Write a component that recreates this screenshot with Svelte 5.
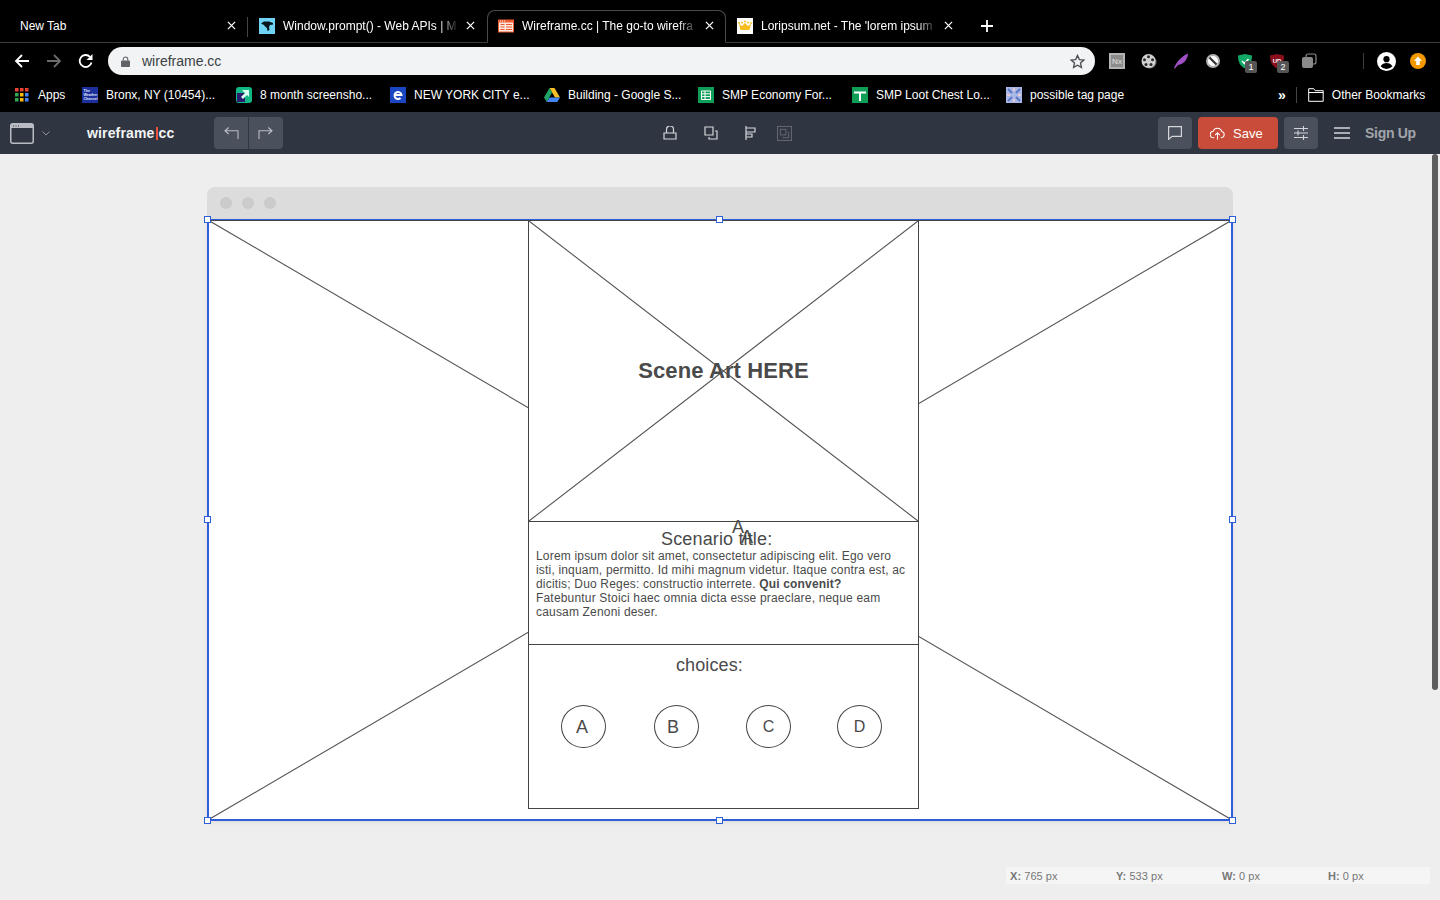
<script>
  const tabs = [
    { title: 'New Tab', icon: '' },
    { title: 'Window.prompt() - Web APIs | M', icon: 'mdn' },
    { title: 'Wireframe.cc | The go-to wirefra', icon: 'wf', active: true },
    { title: "Loripsum.net - The 'lorem ipsum", icon: 'crown' }
  ];
  const bookmarks = [
    { label: 'Bronx, NY (10454)...', icon: 'weather' },
    { label: '8 month screensho...', icon: 'shot' },
    { label: 'NEW YORK CITY e...', icon: 'ie' },
    { label: 'Building - Google S...', icon: 'drive' },
    { label: 'SMP Economy For...', icon: 'sheet' },
    { label: 'SMP Loot Chest Lo...', icon: 'cross' },
    { label: 'possible tag page', icon: 'tag' }
  ];
  const handles = ['tl', 'tc', 'tr', 'ml', 'mr', 'bl', 'bc', 'br'];
  const choices = [
    { key: 'A', cls: 'a' },
    { key: 'B', cls: 'b' },
    { key: 'C', cls: 'c' },
    { key: 'D', cls: 'd' }
  ];
  const stats = [
    { k: 'X:', v: '765 px' },
    { k: 'Y:', v: '533 px' },
    { k: 'W:', v: '0 px' },
    { k: 'H:', v: '0 px' }
  ];
</script>

{#snippet favicon(name)}
  <svg class="fav" viewBox="0 0 16 16">
    {#if name === 'mdn'}
      <rect width="16" height="16" fill="#6fd3f5" />
      <path d="M2 5.500L5 3.500h5l4 1.500v1.500l-3 .5-1 2 .5 3-2 1-.5-3-2-1.500-1-1.500z" fill="#06141c" />
    {:else if name === 'wf'}
      <rect width="16" height="13" y="1.500" fill="#f05a32" />
      <rect x="1" y="4.500" width="14" height="9" fill="#fde6dc" />
      <path d="M2.500 6.500h4M8 6.500h6M2.500 9h4M8 9h6M2.500 11.500h4M8 11.500h6" stroke="#f05a32" stroke-width="1" />
      <path d="M2 3h1M4 3h1M6 3h1" stroke="#fff" />
    {:else if name === 'crown'}
      <rect width="16" height="16" fill="#fff" />
      <path d="M2 6l3 2 3-3 3 3 3-2-1.500 6h-9z" fill="#f7bd1e" />
      <circle cx="2" cy="5" r="1" fill="#f7bd1e" /><circle cx="5" cy="4.500" r="1" fill="#f7bd1e" /><circle cx="8" cy="3.500" r="1" fill="#f7bd1e" /><circle cx="11" cy="4.500" r="1" fill="#f7bd1e" /><circle cx="14" cy="5" r="1" fill="#f7bd1e" />
    {:else if name === 'weather'}
      <rect width="16" height="16" fill="#1d2f9c" />
      <text x="1.500" y="5" font-size="3.600" font-weight="700" fill="#dfe4fa" font-family="Liberation Sans">The</text>
      <text x="1.500" y="9" font-size="3.600" font-weight="700" fill="#dfe4fa" font-family="Liberation Sans">Weather</text>
      <text x="1.500" y="13" font-size="3.600" font-weight="700" fill="#dfe4fa" font-family="Liberation Sans">Channel</text>
    {:else if name === 'shot'}
      <rect width="16" height="16" rx="3" fill="#12b886" />
      <rect x="1" y="6" width="8" height="9" fill="#2b1d6b" />
      <path d="M6 3h7v7l-2-2-4 4-2-2 4-4z" fill="#d8fff0" />
    {:else if name === 'ie'}
      <rect width="16" height="16" fill="#1b46c2" />
      <path d="M4.500 8h7a3.500 3.500 0 1 0-1 3" fill="none" stroke="#fff" stroke-width="2" />
    {:else if name === 'drive'}
      <path d="M5.500 1h5l5.500 9.500h-5z" fill="#f6bf26" />
      <path d="M5.500 1L0 10.500 2.700 15l5.300-9.500z" fill="#1fa463" />
      <path d="M2.700 15h10.600L16 10.500H5.400z" fill="#4385f5" />
    {:else if name === 'sheet'}
      <rect width="16" height="16" fill="#0f9d58" />
      <path d="M3.500 4h9v8.500h-9zM3.500 6.800h9M3.500 9.600h9M7 4v8.500" fill="none" stroke="#fff" />
    {:else if name === 'cross'}
      <rect width="16" height="16" fill="#0f9d58" />
      <path d="M2 5.500h12M8 5.500V14" stroke="#fff" stroke-width="2" />
    {:else if name === 'tag'}
      <rect width="16" height="16" fill="#a9b8e6" />
      <path d="M2 2l4 4M14 2l-4 4M2 14l4-4M14 14l-4-4" stroke="#5e78c9" stroke-width="2" />
      <path d="M8 1v3M8 12v3M1 8h3M12 8h3" stroke="#e9c9d2" stroke-width="2" />
    {/if}
  </svg>
{/snippet}

<div class="browser">
  <div class="tabstrip">
    {#each tabs as tab}
      <div class="tab" class:active={tab.active} class:plain={!tab.icon}>
        {#if tab.icon}{@render favicon(tab.icon)}{/if}
        <span class="tab-title">{tab.title}</span>
        <svg class="tab-x" viewBox="0 0 10 10"><path d="M1 1l8 8M9 1l-8 8" stroke="#fff" stroke-width="1.400" /></svg>
      </div>
    {/each}
    <svg class="plus" viewBox="0 0 12 12"><path d="M6 0v12M0 6h12" stroke="#fff" stroke-width="1.800" /></svg>
  </div>

  <div class="toolbar">
    <svg class="nav" viewBox="0 0 16 16"><path d="M15 8H2M8 2L2 8l6 6" fill="none" stroke="#fff" stroke-width="1.800" /></svg>
    <svg class="nav dim" viewBox="0 0 16 16"><path d="M1 8h13M8 2l6 6-6 6" fill="none" stroke="#6b6b6b" stroke-width="1.800" /></svg>
    <svg class="nav" viewBox="0 0 16 16"><path d="M13.500 9.500A6 6 0 1 1 12 3.800" fill="none" stroke="#fff" stroke-width="1.800" /><path d="M14.500 1v6h-6z" fill="#fff" /></svg>
    <div class="omnibox">
      <svg class="lock" viewBox="0 0 10 12"><path d="M2.500 5V3.500a2.500 2.500 0 0 1 5 0V5" fill="none" stroke="#5f6368" stroke-width="1.200" /><rect y="5" width="10" height="7" rx="1" fill="#5f6368" /></svg>
      <span class="url">wireframe.cc</span>
      <svg class="star" viewBox="0 0 16 16"><path d="M8 1.500l2 4.400 4.800.5-3.600 3.200 1 4.700L8 11.900l-4.200 2.400 1-4.700L1.200 6.400 6 5.900z" fill="none" stroke="#4a4d52" stroke-width="1.400" /></svg>
    </div>
    <div class="exts">
      <svg class="ext" viewBox="0 0 16 16"><rect width="16" height="16" fill="#b4b4b4" /><rect x="2" y="2" width="12" height="12" fill="#8b8b8b" /><text x="8" y="11" font-size="8" fill="#e4e4e4" text-anchor="middle" font-family="Liberation Sans">Nx</text></svg>
      <svg class="ext" viewBox="0 0 16 16"><circle cx="9" cy="9" r="6.500" fill="#777" /><circle cx="7.500" cy="8" r="7" fill="#d0d0d0" /><circle cx="7.500" cy="3.800" r="1.500" fill="#2a2a2a" /><circle cx="3.500" cy="6.800" r="1.500" fill="#2a2a2a" /><circle cx="11.500" cy="6.800" r="1.500" fill="#2a2a2a" /><circle cx="5" cy="11.500" r="1.500" fill="#2a2a2a" /><circle cx="10" cy="11.500" r="1.500" fill="#2a2a2a" /></svg>
      <svg class="ext" viewBox="0 0 16 16"><path d="M1 15.500C3 9 9 3 15 .5c-.5 6-4 10.500-10 11.500l-3 3.500z" fill="#a04fc4" /></svg>
      <svg class="ext" viewBox="0 0 16 16"><circle cx="8" cy="8" r="6" fill="#fff" stroke="#b0b0b0" stroke-width="2" /><path d="M4.500 4.500l7 7" stroke="#333" stroke-width="2.200" /></svg>
      <div class="ext-wrap">
        <svg class="ext" viewBox="0 0 16 16"><path d="M1 2.500L8 1l7 1.500C15 9 13 13 8 15.500 3 13 1 9 1 2.500z" fill="#12a866" /><path d="M5 8l2.500 2.500L11.500 6" fill="none" stroke="#fff" stroke-width="1.600" /></svg>
        <span class="ext-badge">1</span>
      </div>
      <div class="ext-wrap">
        <svg class="ext" viewBox="0 0 16 16"><path d="M1 2.500L8 1l7 1.500C15 9 13 13 8 15.500 3 13 1 9 1 2.500z" fill="#8a0f1c" /><text x="8" y="10" font-size="6" font-weight="700" fill="#fff" text-anchor="middle" font-family="Liberation Sans">UD</text></svg>
        <span class="ext-badge">2</span>
      </div>
      <svg class="ext" viewBox="0 0 16 16"><rect x="5" y="1" width="10" height="10" rx="2" fill="none" stroke="#8a8a8a" stroke-width="1.200" /><rect x="1" y="4" width="11" height="11" rx="2" fill="#8a8a8a" /></svg>
    </div>
    <div class="tb-sep"></div>
    <svg class="profile" viewBox="0 0 20 20"><circle cx="10" cy="10" r="10" fill="#fff" /><circle cx="10" cy="7.500" r="3.300" fill="#000" /><path d="M3.800 15c1.500-2.600 3.700-3.400 6.200-3.400s4.700.8 6.200 3.400A8 8 0 0 1 3.800 15z" fill="#000" /></svg>
    <svg class="update" viewBox="0 0 16 16"><circle cx="8" cy="8" r="8" fill="#f29900" /><path d="M8 3.500l4 4.500H9.800v4H6.200V8H4z" fill="#fff" /></svg>
  </div>

  <div class="bookmarks">
    <div class="bm apps">
      <svg class="fav" viewBox="0 0 14 14">
        <path d="M0 0h3.500v3.500H0z" fill="#ea4335" /><path d="M5 0h3.500v3.500H5z" fill="#ea4335" /><path d="M10 0h3.500v3.500H10z" fill="#ea4335" />
        <path d="M0 5h3.500v3.500H0z" fill="#34a853" /><path d="M5 5h3.500v3.500H5z" fill="#fbbc05" /><path d="M10 5h3.500v3.500H10z" fill="#4285f4" />
        <path d="M0 10h3.500v3.500H0z" fill="#34a853" /><path d="M5 10h3.500v3.500H5z" fill="#fbbc05" /><path d="M10 10h3.500v3.500H10z" fill="#4285f4" />
      </svg>
      <span>Apps</span>
    </div>
    {#each bookmarks as b}
      <div class="bm">
        {@render favicon(b.icon)}
        <span>{b.label}</span>
      </div>
    {/each}
    <span class="more">»</span>
    <div class="bm-sep"></div>
    <div class="bm other">
      <svg class="fav" viewBox="0 0 16 14"><path d="M.7.700h5l1.500 2h8v10.600H.7zM.7 4.500h14.500" fill="none" stroke="#fff" stroke-width="1" /></svg>
      <span>Other Bookmarks</span>
    </div>
  </div>
</div>

<header class="appbar">
  <svg class="win-icon" viewBox="0 0 24 21">
    <rect x=".75" y=".75" width="22.500" height="19.500" rx="2" fill="none" stroke="#b9bcc2" stroke-width="1.500" />
    <path d="M1 1h22v4H1z" fill="#b9bcc2" />
    <path d="M3 3h1M5.500 3h1M8 3h1" stroke="#30363f" />
  </svg>
  <svg class="chev" viewBox="0 0 8 5"><path d="M.5.500L4 4 7.500.500" fill="none" stroke="#8d929b" /></svg>
  <div class="logo">wireframe<i></i>cc</div>
  <div class="history">
    <button class="hist-btn" aria-label="Undo"><svg viewBox="0 0 16 14"><path d="M15 13V4H1M5 0.500L1 4l4 3.500" fill="none" stroke="#b9bcc2" stroke-width="1.200" /></svg></button>
    <button class="hist-btn redo" aria-label="Redo"><svg viewBox="0 0 16 14"><path d="M1 13V4h14M11 .500L15 4l-4 3.500" fill="none" stroke="#b9bcc2" stroke-width="1.200" /></svg></button>
  </div>
  <div class="tools">
    <svg class="tool" viewBox="0 0 14 14"><path d="M1 7h12v6H1zM3.500 7V3.500a3.500 3.500 0 0 1 7 0V7" fill="none" stroke="#d4d6da" stroke-width="1.200" /></svg>
    <svg class="tool" viewBox="0 0 14 14"><path d="M1 1h8v8H1z" fill="none" stroke="#d4d6da" stroke-width="1.200" /><path d="M11 5h2v8H5v-2" fill="none" stroke="#d4d6da" stroke-width="1.200" /></svg>
    <svg class="tool" viewBox="0 0 14 14"><path d="M2 0v14M2 2h9v4H2M2 8h6v3H2" fill="none" stroke="#d4d6da" stroke-width="1.200" /></svg>
    <svg class="tool off" viewBox="0 0 16 16"><rect x=".5" y=".5" width="15" height="15" fill="none" stroke="#666a72" /><rect x="3.500" y="3.500" width="6" height="6" fill="none" stroke="#666a72" /><path d="M11.500 6.500h1v6h-6v-1" fill="none" stroke="#666a72" /></svg>
  </div>
  <button class="icon-btn" aria-label="Comments"><svg viewBox="0 0 14 14"><path d="M.6.600h12.800v9.800H4L.6 13.400z" fill="none" stroke="#d4d6da" stroke-width="1.200" /></svg></button>
  <button class="save">
    <svg viewBox="0 0 16 13"><path d="M4.500 11H4A3.500 3.500 0 0 1 3.500 4 4.800 4.800 0 0 1 12.500 4.300 3.400 3.400 0 0 1 12 11h-.500M8 13V6M5.500 8.300L8 5.800l2.500 2.500" fill="none" stroke="#fff" stroke-width="1.100" /></svg>
    Save
  </button>
  <button class="icon-btn" aria-label="Settings"><svg viewBox="0 0 14 14"><path d="M0 2.500h14M0 7h14M0 11.500h14M9.500 0v5M4 4.500v5M9.500 9v5" fill="none" stroke="#d4d6da" stroke-width="1.100" /></svg></button>
  <svg class="burger" viewBox="0 0 16 12"><path d="M0 1h16M0 6h16M0 11h16" stroke="#d4d6da" stroke-width="1.400" /></svg>
  <span class="signup">Sign Up</span>
</header>

<main class="canvas">
  <div class="scrollbar"></div>

  <div class="win-bar">
    <i></i><i></i><i></i>
  </div>

  <div class="page">
    <svg class="cross-lines" viewBox="0 0 100 100" preserveAspectRatio="none">
      <path d="M0 0L100 100M100 0L0 100" stroke="#555" stroke-width="1.100" vector-effect="non-scaling-stroke" />
    </svg>
  </div>

  <div class="box scene">
    <svg class="cross-lines" viewBox="0 0 100 100" preserveAspectRatio="none">
      <path d="M0 0L100 100M100 0L0 100" stroke="#555" stroke-width="1.100" vector-effect="non-scaling-stroke" />
    </svg>
    <span class="scene-text">Scene Art HERE</span>
  </div>

  <div class="box story">
    <span class="story-title">Scenario title:</span>
    <p>Lorem ipsum dolor sit amet, consectetur adipiscing elit. Ego vero isti, inquam, permitto. Id mihi magnum videtur. Itaque contra est, ac dicitis; Duo Reges: constructio interrete. <b>Qui convenit?</b><br />Fatebuntur Stoici haec omnia dicta esse praeclare, neque eam causam Zenoni deser.</p>
  </div>
  <span class="aa one">A</span>
  <span class="aa two">A</span>

  <div class="box picks">
    <span class="picks-title">choices:</span>
    {#each choices as c}
      <div class="pick {c.cls}"><span>{c.key}</span></div>
    {/each}
  </div>

  <div class="selection"></div>
  {#each handles as h}
    <i class="handle {h}"></i>
  {/each}

  <div class="stats">
    {#each stats as s}
      <span class="stat"><b>{s.k}</b> {s.v}</span>
    {/each}
  </div>
</main>

<style>
  :global(body) {
    margin: 0;
    width: 1440px;
    height: 900px;
    overflow: hidden;
    font-family: "Liberation Sans", Arial, sans-serif;
  }

  .browser {
    background: #000;
    color: #fff;
    font-size: 12px;
  }

  .tabstrip {
    display: flex;
    align-items: flex-end;
    box-sizing: border-box;
    height: 43px;
    padding-left: 9px;
    border-bottom: 1px solid #3d3d3d;
  }

  .tab {
    position: relative;
    display: flex;
    align-items: center;
    box-sizing: border-box;
    width: 239px;
    height: 33px;
    padding: 0 10px 2px 11px;
    margin-bottom: -1px;
  }

  .tab.plain .tab-title {
    margin-left: 0;
  }

  .tab:first-child::after {
    content: '';
    position: absolute;
    right: 0;
    top: 7px;
    height: 20px;
    width: 1px;
    background: #444;
  }

  .tab.active {
    background: #000;
    border: 1px solid #4a4a4a;
    border-bottom: 1px solid #000;
    border-radius: 8px 8px 0 0;
    padding-left: 10px;
    padding-right: 9px;
    z-index: 1;
  }

  .fav {
    flex: none;
    width: 16px;
    height: 16px;
  }

  .tab-title {
    flex: 1;
    min-width: 0;
    margin: 0 8px;
    white-space: nowrap;
    -webkit-mask-image: linear-gradient(to right, #000 156px, transparent 176px);
    mask-image: linear-gradient(to right, #000 156px, transparent 176px);
  }

  .tab.plain .tab-title {
    -webkit-mask-image: none;
    mask-image: none;
  }

  .tab-x {
    flex: none;
    width: 9px;
    height: 9px;
    margin-right: 2px;
  }

  .plus {
    width: 12px;
    height: 12px;
    margin: 0 0 10px 16px;
  }

  .toolbar {
    display: flex;
    align-items: center;
    height: 41px;
    padding-bottom: 5px;
    box-sizing: border-box;
  }

  .nav {
    flex: none;
    width: 16px;
    height: 16px;
    margin-left: 14px;
    margin-right: 2px;
  }

  .omnibox {
    display: flex;
    align-items: center;
    width: 987px;
    height: 28px;
    margin-left: 12px;
    padding: 0 10px 0 13px;
    box-sizing: border-box;
    border-radius: 14px;
    background: #f1f3f4;
    color: #3c3f44;
    font-size: 14px;
  }

  .lock {
    width: 9px;
    height: 11px;
    margin-right: 12px;
  }

  .url {
    flex: 1;
  }

  .star {
    width: 15px;
    height: 15px;
  }

  .exts {
    display: flex;
    margin-left: 14px;
    gap: 16px;
  }

  .ext-wrap {
    position: relative;
    width: 16px;
    height: 16px;
  }

  .ext {
    display: block;
    width: 16px;
    height: 16px;
  }

  .ext-badge {
    position: absolute;
    left: 8px;
    top: 8px;
    width: 12px;
    height: 12px;
    border-radius: 2px;
    background: #555;
    color: #fff;
    font-size: 9px;
    line-height: 12px;
    text-align: center;
  }

  .tb-sep {
    width: 1px;
    height: 16px;
    margin-left: 46px;
    background: #3c3c3c;
  }

  .profile {
    width: 19px;
    height: 19px;
    margin-left: 13px;
  }

  .update {
    width: 16px;
    height: 16px;
    margin-left: 14px;
  }

  .bookmarks {
    display: flex;
    align-items: center;
    box-sizing: border-box;
    height: 28px;
    padding: 0 0 6px 15px;
  }

  .bm {
    display: flex;
    align-items: center;
    gap: 8px;
    width: 154px;
    flex: none;
    white-space: nowrap;
  }

  .bm.apps {
    width: 67px;
    gap: 9px;
  }

  .bm.apps .fav {
    width: 14px;
    height: 14px;
  }

  .more {
    margin-left: 118px;
    font-size: 14px;
    font-weight: 700;
    line-height: 1;
  }

  .bm-sep {
    width: 1px;
    height: 16px;
    margin-left: 10px;
    background: #444;
  }

  .bm.other {
    margin-left: 11px;
    width: auto;
  }

  .appbar {
    display: flex;
    align-items: center;
    height: 42px;
    background: #303641;
  }

  .win-icon {
    width: 24px;
    height: 21px;
    margin-left: 10px;
  }

  .chev {
    width: 8px;
    height: 5px;
    margin-left: 8px;
  }

  .logo {
    margin-left: 37px;
    width: 88px;
    color: #f3f4f5;
    font-size: 14px;
    font-weight: 700;
    letter-spacing: 0.15px;
    white-space: nowrap;
  }

  .logo i {
    display: inline-block;
    width: 2px;
    height: 13px;
    margin: 0 1px;
    vertical-align: -2px;
    background: #e8533a;
  }

  .history {
    display: flex;
    gap: 1px;
    margin-left: 39px;
    border-radius: 4px;
    overflow: hidden;
  }

  .hist-btn {
    width: 34px;
    height: 32px;
    padding: 0 0 0 1px;
    border: 0;
    background: #4a505c;
  }

  .hist-btn.redo {
    padding: 0 2px 0 0;
  }

  .hist-btn svg {
    display: block;
    width: 15px;
    height: 13px;
    margin: auto;
  }

  .tools {
    display: flex;
    align-items: center;
    margin-left: 380px;
    width: 495px;
  }

  .tool {
    width: 14px;
    height: 14px;
    margin-right: 27px;
  }

  .tool:nth-child(2) {
    margin-right: 26px;
  }

  .tool:nth-child(3) {
    margin-right: 19px;
  }

  .tool.off {
    width: 15px;
    height: 15px;
  }

  .icon-btn {
    width: 34px;
    height: 32px;
    padding: 0;
    border: 0;
    border-radius: 4px;
    background: #4a505c;
  }

  .icon-btn svg {
    display: block;
    width: 14px;
    height: 14px;
    margin: auto;
  }

  .save {
    display: flex;
    align-items: center;
    gap: 8px;
    width: 80px;
    height: 32px;
    margin: 0 6px;
    padding: 0 0 0 12px;
    box-sizing: border-box;
    border: 0;
    border-radius: 4px;
    background: #c94c3b;
    color: #fff;
    font: 13px "Liberation Sans", Arial, sans-serif;
  }

  .save svg {
    width: 15px;
    height: 13px;
  }

  .burger {
    width: 16px;
    height: 12px;
    margin-left: 16px;
  }

  .signup {
    margin-left: 15px;
    color: #a1a5ab;
    font-size: 14px;
    font-weight: 700;
    letter-spacing: -0.3px;
  }

  /* free canvas: everything below sits at its drawn coordinates */
  .canvas {
    position: relative;
    height: 746px;
    background: #eee;
    overflow: hidden;
    color: #4a4a4a;
  }

  .scrollbar {
    position: absolute;
    left: 1432px;
    top: 0;
    width: 6px;
    height: 536px;
    border-radius: 3px;
    background: #5c5c5c;
  }

  .win-bar {
    position: absolute;
    left: 207px;
    top: 33px;
    width: 1026px;
    height: 33px;
    display: flex;
    align-items: center;
    gap: 10px;
    padding: 0 0 2px 13px;
    box-sizing: border-box;
    border-radius: 8px 8px 0 0;
    background: #dcdcdc;
  }

  .win-bar i {
    width: 12px;
    height: 12px;
    border-radius: 50%;
    background: #cbcbcb;
  }

  .page {
    position: absolute;
    left: 208px;
    top: 66px;
    width: 1024px;
    height: 600px;
    background: #fff;
    box-shadow: inset 0 1px 0 #444, 0 2px 6px rgba(0, 0, 0, 0.08);
  }

  .cross-lines {
    position: absolute;
    inset: 0;
    width: 100%;
    height: 100%;
  }

  .box {
    position: absolute;
    left: 528px;
    width: 391px;
    box-sizing: border-box;
    border: 1px solid #444;
    background: #fff;
  }

  .scene {
    top: 66px;
    height: 302px;
  }

  .scene-text {
    position: absolute;
    left: 0;
    right: 0;
    top: 136px;
    text-align: center;
    font-size: 22px;
    font-weight: 700;
    letter-spacing: 0.1px;
    line-height: 28px;
  }

  .story {
    top: 367px;
    height: 124px;
  }

  .story-title {
    position: absolute;
    left: 132px;
    top: 7px;
    font-size: 18px;
    letter-spacing: 0.15px;
    line-height: 20px;
  }

  .story p {
    position: absolute;
    left: 7px;
    top: 27px;
    width: 376px;
    margin: 0;
    font-size: 12px;
    line-height: 14px;
    letter-spacing: 0.18px;
  }

  .aa {
    position: absolute;
    font-size: 18px;
    line-height: 20px;
  }

  .aa.one {
    left: 732px;
    top: 363px;
  }

  .aa.two {
    left: 741px;
    top: 373px;
  }

  .picks {
    top: 490px;
    height: 165px;
  }

  .picks-title {
    position: absolute;
    left: 147px;
    top: 10px;
    font-size: 18px;
    letter-spacing: 0.1px;
    line-height: 20px;
  }

  .pick {
    position: absolute;
    top: 60px;
    width: 45px;
    height: 43px;
    box-sizing: border-box;
    border: 1px solid #444;
    border-radius: 50%;
    display: flex;
    align-items: center;
    justify-content: center;
  }

  .pick.a { left: 32px; font-size: 18px; padding-top: 2px; }
  .pick.b { left: 125px; font-size: 18px; padding-top: 2px; }
  .pick.c { left: 217px; font-size: 16px; }
  .pick.d { left: 308px; font-size: 16px; }

  .pick.a span { margin-right: 3px; }
  .pick.b span { margin-right: 7px; }

  .selection {
    position: absolute;
    left: 207px;
    top: 65px;
    width: 1026px;
    height: 602px;
    box-sizing: border-box;
    border: 2px solid #2f5fd8;
    border-top-width: 1px;
  }

  .handle {
    position: absolute;
    width: 7px;
    height: 7px;
    box-sizing: border-box;
    border: 1px solid #2f5fd8;
    background: #fff;
  }

  .handle.tl { left: 204px; top: 62px; }
  .handle.tc { left: 716px; top: 62px; }
  .handle.tr { left: 1229px; top: 62px; }
  .handle.ml { left: 204px; top: 362px; }
  .handle.mr { left: 1229px; top: 362px; }
  .handle.bl { left: 204px; top: 663px; }
  .handle.bc { left: 716px; top: 663px; }
  .handle.br { left: 1229px; top: 663px; }

  .stats {
    position: absolute;
    left: 1006px;
    top: 713px;
    width: 424px;
    height: 17px;
    display: flex;
    background: #f5f5f5;
    color: #777;
    font-size: 11px;
    line-height: 18px;
    letter-spacing: 0.05px;
  }

  .stat {
    width: 106px;
    padding-left: 4px;
    box-sizing: border-box;
  }
</style>
